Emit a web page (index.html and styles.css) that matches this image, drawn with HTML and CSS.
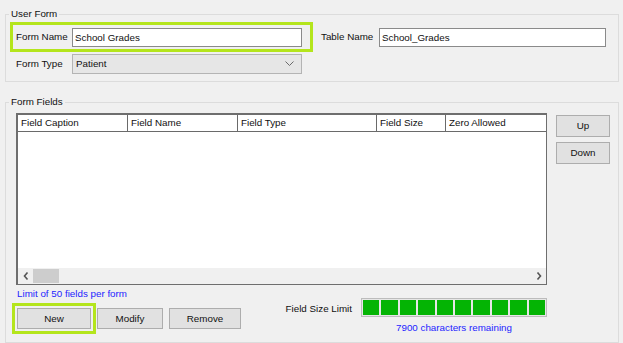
FILE: index.html
```html
<!DOCTYPE html>
<html lang="en">
<head>
  <meta charset="UTF-8">
  <title>User Form</title>
  <link rel="stylesheet" href="styles.css">
</head>
<body>
  <div class="window">
    <fieldset class="group user-form">
      <legend>User Form</legend>
      <div class="group-body">
        <div class="row">
          <div class="highlight name-box">
            <label class="lbl lbl-name">Form Name</label>
            <input class="text form-name" type="text" value="School Grades">
          </div>
          <label class="lbl lbl-table">Table Name</label>
          <input class="text table-name" type="text" value="School_Grades">
        </div>
        <div class="row type-row">
          <label class="lbl lbl-type">Form Type</label>
          <div class="combo">
            <span>Patient</span>
            <svg width="9" height="6" viewBox="0 0 9 6"><polyline points="0.5,0.5 4.5,4.5 8.5,0.5" fill="none" stroke="#6a6a6a" stroke-width="1"/></svg>
          </div>
        </div>
      </div>
    </fieldset>

    <fieldset class="group form-fields">
      <legend>Form Fields</legend>
      <div class="group-body fields-grid">
        <div class="listview">
          <div class="lv-head">
            <span class="col c1">Field Caption</span>
            <span class="col c2">Field Name</span>
            <span class="col c3">Field Type</span>
            <span class="col c4">Field Size</span>
            <span class="col c5">Zero Allowed</span>
          </div>
          <div class="lv-body"></div>
          <div class="hscroll">
            <span class="arrow">
              <svg width="6" height="8" viewBox="0 0 6 8"><polyline points="4.5,0.5 1.5,4 4.5,7.5" fill="none" stroke="#555" stroke-width="1.6"/></svg>
            </span>
            <span class="thumb"></span>
            <span class="track"></span>
            <span class="arrow">
              <svg width="6" height="8" viewBox="0 0 6 8"><polyline points="1.5,0.5 4.5,4 1.5,7.5" fill="none" stroke="#555" stroke-width="1.6"/></svg>
            </span>
          </div>
        </div>

        <div class="side-buttons">
          <button class="btn">Up</button>
          <button class="btn">Down</button>
        </div>

        <div class="bottom">
          <div class="left">
            <div class="note">Limit of 50 fields per form</div>
            <div class="actions">
              <button class="btn new">New</button>
              <button class="btn modify">Modify</button>
              <button class="btn remove">Remove</button>
            </div>
          </div>
          <div class="limit">
            <span class="lbl limit-lbl">Field Size Limit</span>
            <div class="meter-col">
              <div class="meter">
                <span></span><span></span><span></span><span></span><span></span>
                <span></span><span></span><span></span><span></span><span></span>
              </div>
              <div class="note remaining">7900 characters remaining</div>
            </div>
          </div>
        </div>
      </div>
    </fieldset>
  </div>
</body>
</html>
```

FILE: styles.css
```css
* {
  box-sizing: border-box;
}

body {
  margin: 0;
  background: #f0f0f0;
  font: 9.8px/12px "Liberation Sans", Arial, sans-serif;
  color: #111;
}

.window {
  padding-top: 8px;
}

.group {
  margin: 0 4px 0 5px;
  padding: 0;
  min-width: 0;
  border: 1px solid #dcdcdc;
}

.group legend {
  margin-left: 3px;
  padding: 0 2px;
  line-height: 12px;
}

.form-fields {
  margin-top: 14px;
}

/* User Form */
.user-form .group-body {
  padding: 2px 12px 7px 4px;
}

.row {
  display: flex;
  align-items: center;
}

.highlight {
  border: 3px solid #b4e51c;
}

.name-box {
  display: flex;
  align-items: center;
  height: 30px;
  padding: 0 8px 0 3px;
}

.lbl {
  white-space: nowrap;
}

.lbl-name,
.lbl-type {
  width: 56px;
}

.lbl-table {
  width: 58px;
  margin-left: 8px;
}

.text {
  height: 19px;
  padding: 0 2px;
  border: 1px solid #8a8a8a;
  background: #fff;
  font: inherit;
  color: #111;
  outline: none;
}

.form-name {
  width: 230px;
}

.table-name {
  width: 227px;
}

.type-row {
  margin-top: 2px;
  padding-left: 6px;
}

.combo {
  display: flex;
  align-items: center;
  justify-content: space-between;
  width: 230px;
  height: 20px;
  padding: 0 7px 0 3px;
  background: #e6e6e6;
  border: 1px solid #b4b4b4;
}

/* Form Fields */
.fields-grid {
  display: grid;
  grid-template-columns: 531px 54px;
  column-gap: 9px;
  padding: 5px 8px 8px 10px;
}

.listview {
  display: flex;
  flex-direction: column;
  height: 172px;
  border: 1px solid #6e6e6e;
  border-top-width: 2px;
  border-left-width: 2px;
  background: #fff;
}

.lv-head {
  display: flex;
  height: 17px;
  border-bottom: 1px solid #6a6a6a;
}

.col {
  padding-left: 3px;
  line-height: 16px;
  border-right: 1px solid #6a6a6a;
  white-space: nowrap;
}

.c1 { width: 110px; }
.c2 { width: 110px; }
.c3 { width: 139px; }
.c4 { width: 69px; }
.c5 { flex: 1; border-right: none; }

.lv-body {
  flex: 1;
}

.hscroll {
  display: flex;
  align-items: center;
  height: 16px;
  background: #f0f0f0;
}

.arrow {
  display: flex;
  align-items: center;
  justify-content: center;
  width: 15px;
  height: 16px;
}

.thumb {
  width: 26px;
  height: 14px;
  background: #cdcdcd;
}

.track {
  flex: 1;
}

.side-buttons {
  display: flex;
  flex-direction: column;
  gap: 5px;
  padding-top: 2px;
}

.btn {
  height: 22px;
  padding: 0;
  background: #e1e1e1;
  border: 1px solid #adadad;
  font: inherit;
  color: #111;
}

.bottom {
  display: flex;
  grid-column: 1;
}

.note {
  color: #2424ff;
}

.left .note {
  margin-top: 3px;
  padding-left: 1px;
}

.actions {
  display: flex;
  gap: 6px;
  margin-top: 8px;
  padding-left: 1px;
}

.actions .btn {
  height: 21px;
}

.new {
  width: 74px;
  outline: 3px solid #b4e51c;
  outline-offset: 2px;
}

.modify {
  width: 66px;
}

.remove {
  width: 72px;
}

.limit {
  display: flex;
  margin-left: auto;
  margin-top: 13px;
}

.limit-lbl {
  margin-right: 9px;
  line-height: 21px;
}

.meter-col {
  width: 186px;
}

.meter {
  display: flex;
  gap: 2px;
  height: 19px;
  padding: 1px;
  background: #e6e6e6;
  border: 1px solid #bcbcbc;
}

.meter span {
  flex: 1;
  background: #04b404;
}

.remaining {
  margin-top: 5px;
  text-align: center;
}
```
